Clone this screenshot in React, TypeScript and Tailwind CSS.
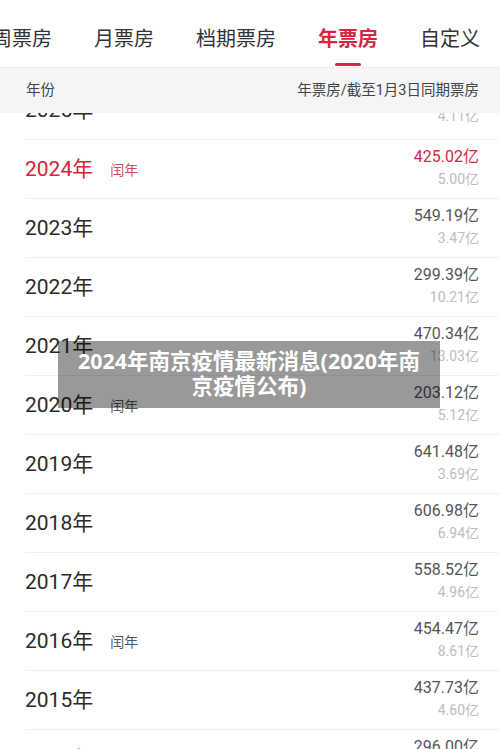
import React from 'react';

const tabs = ['周票房', '月票房', '档期票房', '年票房', '自定义'];

interface YearRow {
  year: string;
  total: string;
  same: string;
  leap?: boolean;
  current?: boolean;
}

const rows: YearRow[] = [
  { year: '2025', total: '4.11', same: '4.11' },
  { year: '2024', total: '425.02', same: '5.00', leap: true, current: true },
  { year: '2023', total: '549.19', same: '3.47' },
  { year: '2022', total: '299.39', same: '10.21' },
  { year: '2021', total: '470.34', same: '13.03' },
  { year: '2020', total: '203.12', same: '5.12', leap: true },
  { year: '2019', total: '641.48', same: '3.69' },
  { year: '2018', total: '606.98', same: '6.94' },
  { year: '2017', total: '558.52', same: '4.96' },
  { year: '2016', total: '454.47', same: '8.61', leap: true },
  { year: '2015', total: '437.73', same: '4.60' },
  { year: '2014', total: '296.00', same: '6.14' },
];

const font = { fontFamily: 'Roboto, "Noto Sans CJK SC", sans-serif' };

export default function App() {
  return (
    <div
      className="relative w-[500px] h-[749px] overflow-hidden bg-white flex flex-col"
      style={font}
    >
      {/* Tabs */}
      <div className="h-[68px] shrink-0 bg-white border-b border-[#ececec] overflow-hidden">
        <div className="flex items-start gap-[42px] -ml-[8px] pt-[27px] whitespace-nowrap">
          {tabs.map((t) => {
            const active = t === '年票房';
            return (
              <div key={t} className="flex flex-col items-center">
                <span
                  className={`text-[20px] leading-[24px] ${
                    active ? 'text-[#d8253f] font-bold' : 'text-[#333]'
                  }`}
                >
                  {t}
                </span>
                {active && <span className="mt-[12px] w-[26px] h-[3px] rounded-full bg-[#d8253f]" />}
              </div>
            );
          })}
        </div>
      </div>

      {/* Column header */}
      <div className="h-[45px] shrink-0 bg-[#f5f5f5] flex items-center justify-between pl-[26px] pr-[21px] text-[14.5px] text-[#444] relative z-10">
        <span>年份</span>
        <span>年票房/截至1月3日同期票房</span>
      </div>

      {/* List */}
      <div className="flex-1 overflow-hidden">
        <div className="-mt-[33px]">
          {rows.map((r, i) => (
            <div
              key={r.year}
              className="ml-[25px] h-[59px] border-t border-[#efefef] flex items-center justify-between pr-[21px]"
            >
              <div className="flex items-center">
                <span
                  className={`text-[21px] leading-[28px] ${
                    r.current ? 'text-[#d4233d]' : 'text-[#2b2b2b]'
                  }`}
                >
                  {r.year}年
                </span>
                {r.leap && (
                  <span
                    className={`ml-[17px] mt-[2px] text-[14px] ${
                      r.current ? 'text-[#d24a5e]' : 'text-[#555]'
                    }`}
                  >
                    闰年
                  </span>
                )}
              </div>
              <div className={`flex flex-col items-end ${i === 0 ? '-mt-[10px]' : '-mt-[3px]'}`}>
                <span
                  className={`text-[16px] leading-[23px] ${
                    r.current ? 'text-[#cc2a43]' : 'text-[#555]'
                  }`}
                >
                  {r.total}亿
                </span>
                <span className="text-[14px] leading-[23px] text-[#bdbdbd]">{r.same}亿</span>
              </div>
            </div>
          ))}
        </div>
      </div>

      {/* Title overlay */}
      <div className="absolute left-[58px] top-[341px] w-[382px] h-[67px] bg-black/40 flex items-center justify-center px-[14px] pb-[3px] z-20">
        <p
          className="text-white text-[21.5px] leading-[25px] font-bold text-center"
          style={{ fontFamily: '"Open Sans", "Noto Sans CJK SC", sans-serif' }}
        >
          2024年南京疫情最新消息(2020年南京疫情公布)
        </p>
      </div>
    </div>
  );
}
